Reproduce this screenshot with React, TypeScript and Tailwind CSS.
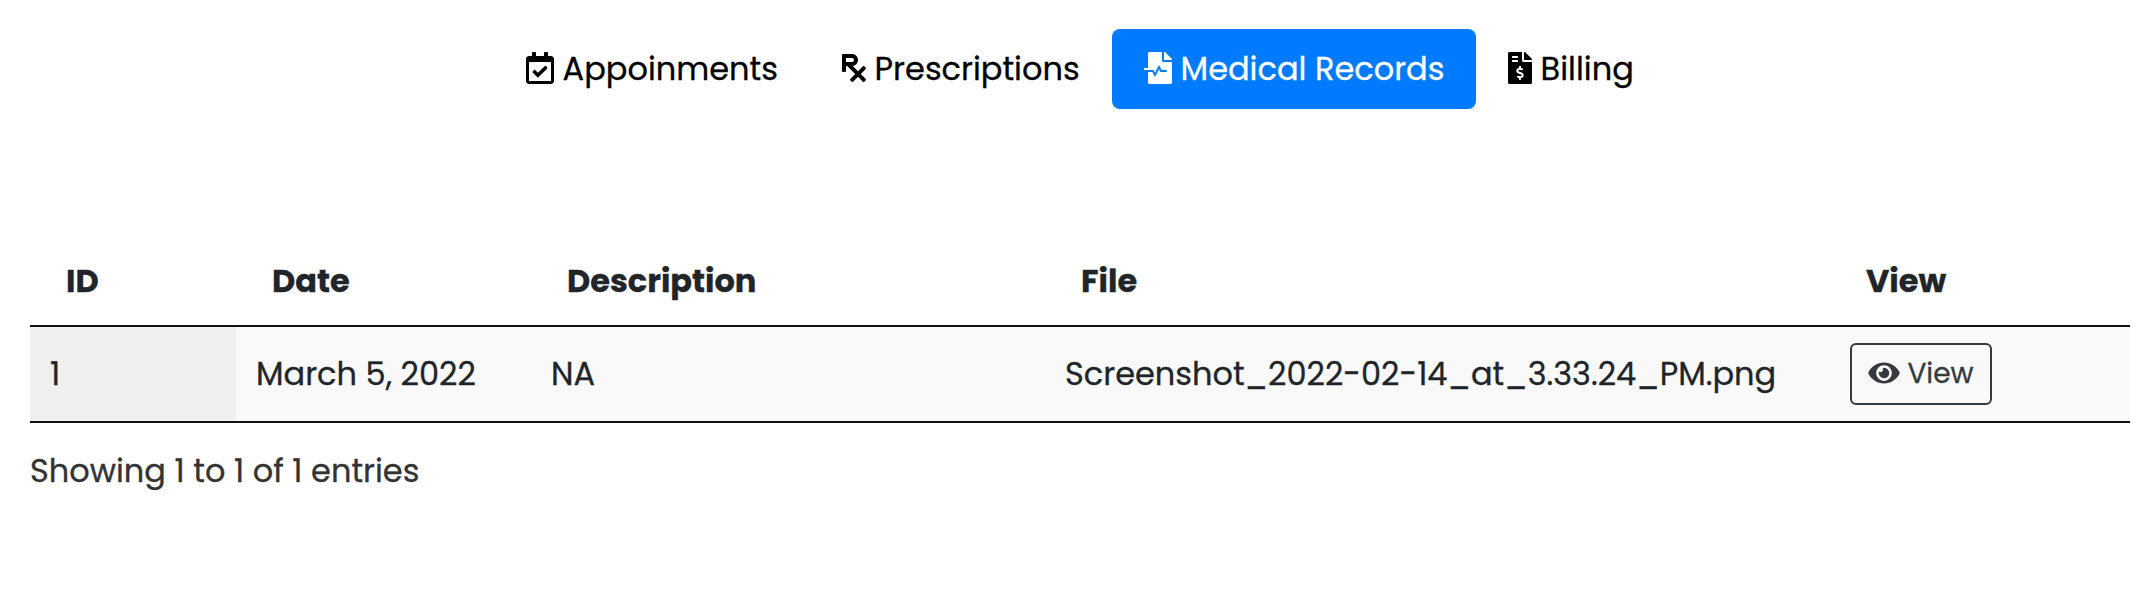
import React from "react";
import { FaRegCalendarCheck, FaPrescription, FaFileMedicalAlt, FaFileInvoiceDollar, FaEye } from "react-icons/fa";

const tabs = [
  { label: "Appoinments", Icon: FaRegCalendarCheck, icon: "w-[28px]", box: "w-[316px] text-black" },
  { label: "Prescriptions", Icon: FaPrescription, icon: "w-[24px]", box: "w-[302px] text-black" },
  { label: "Medical Records", Icon: FaFileMedicalAlt, icon: "w-[28px]", box: "w-[364px] rounded-[8px] bg-[#007bff] text-white" },
  { label: "Billing", Icon: FaFileInvoiceDollar, icon: "w-[24px]", box: "w-[188px] text-black" },
];

const headers = ["ID", "Date", "Description", "File", "View"];

export default function App() {
  return (
    <div className="h-[600px] w-full overflow-hidden bg-white pt-[29px] font-['Poppins','Inter',sans-serif] text-[32px] leading-[48px] text-[#212529] [-webkit-text-stroke:0.3px]">
      <nav className="flex h-[80px] pl-[494px]">
        {tabs.map(({ label, Icon, icon, box }) => (
          <a key={label} className={`flex h-full items-center whitespace-nowrap pl-[32px] ${box}`}>
            <Icon className={`h-[32px] shrink-0 -translate-y-px ${icon}`} />
            <span className="ml-[8.6px]">{label}</span>
          </a>
        ))}
      </nav>

      <main className="ml-[30px] mt-[124px] w-[2100px]">
        <div className="grid h-[94px] grid-cols-[206px_295px_514px_785px_300px] items-center border-b-2 border-[#111] pt-[4px] font-bold">
          {headers.map((label) => (
            <div key={label} className="pl-[36px]">{label}</div>
          ))}
        </div>
        <div className="grid h-[96px] grid-cols-[206px_295px_514px_785px_300px] border-b-2 border-[#111] bg-[#f9f9f9]">
          <div className="flex items-center bg-[#f0f0f0] pl-[20px]"><span>1</span></div>
          <div className="flex items-center pl-[20px]"><span>March 5, 2022</span></div>
          <div className="flex items-center pl-[20px]"><span>NA</span></div>
          <div className="flex items-center pl-[20px]"><span>Screenshot_2022-02-14_at_3.33.24_PM.png</span></div>
          <div className="flex items-center pl-[20px]">
            <button className="flex h-[62px] w-[142px] items-center rounded-[6px] border-2 border-[#343a40] pl-[16px] text-[28px] leading-[42px] text-[#343a40]">
              <FaEye className="h-[28px] w-[32px] shrink-0 -translate-y-px" />
              <span className="ml-[7.4px]">View</span>
            </button>
          </div>
        </div>
        <p className="mt-[24px] text-[#333]">Showing 1 to 1 of 1 entries</p>
      </main>
    </div>
  );
}
